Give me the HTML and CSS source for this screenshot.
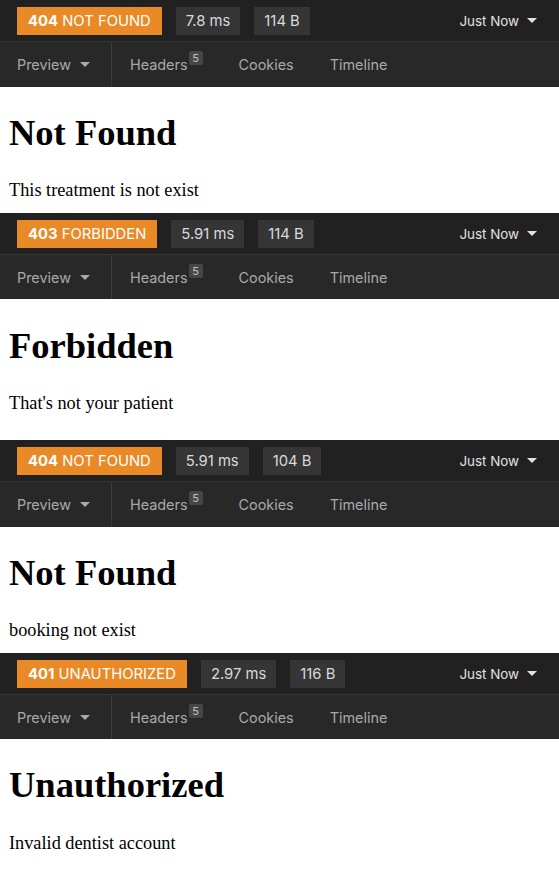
FILE: index.html
```html
<!DOCTYPE html>
<html>
<head>
<meta charset="utf-8">
<link rel="stylesheet" href="styles.css">
</head>
<body>
  <section class="response">
    <div class="status-bar">
      <span class="badge"><b>404</b> NOT FOUND</span>
      <span class="pill">7.8 ms</span>
      <span class="pill">114 B</span>
      <span class="when">Just Now <i class="caret"></i></span>
    </div>
    <nav class="tabs">
      <span class="tab tab-preview">Preview <i class="caret"></i></span>
      <span class="tab">Headers<sup class="count">5</sup></span>
      <span class="tab">Cookies</span>
      <span class="tab">Timeline</span>
    </nav>
    <div class="preview">
      <h1>Not Found</h1>
      <p>This treatment is not exist</p>
    </div>
  </section>

  <section class="response r2">
    <div class="status-bar">
      <span class="badge"><b>403</b> FORBIDDEN</span>
      <span class="pill">5.91 ms</span>
      <span class="pill">114 B</span>
      <span class="when">Just Now <i class="caret"></i></span>
    </div>
    <nav class="tabs">
      <span class="tab tab-preview">Preview <i class="caret"></i></span>
      <span class="tab">Headers<sup class="count">5</sup></span>
      <span class="tab">Cookies</span>
      <span class="tab">Timeline</span>
    </nav>
    <div class="preview">
      <h1>Forbidden</h1>
      <p>That's not your patient</p>
    </div>
  </section>

  <section class="response r3">
    <div class="status-bar">
      <span class="badge"><b>404</b> NOT FOUND</span>
      <span class="pill">5.91 ms</span>
      <span class="pill">104 B</span>
      <span class="when">Just Now <i class="caret"></i></span>
    </div>
    <nav class="tabs">
      <span class="tab tab-preview">Preview <i class="caret"></i></span>
      <span class="tab">Headers<sup class="count">5</sup></span>
      <span class="tab">Cookies</span>
      <span class="tab">Timeline</span>
    </nav>
    <div class="preview">
      <h1>Not Found</h1>
      <p>booking not exist</p>
    </div>
  </section>

  <section class="response r4">
    <div class="status-bar">
      <span class="badge"><b>401</b> UNAUTHORIZED</span>
      <span class="pill">2.97 ms</span>
      <span class="pill">116 B</span>
      <span class="when">Just Now <i class="caret"></i></span>
    </div>
    <nav class="tabs">
      <span class="tab tab-preview">Preview <i class="caret"></i></span>
      <span class="tab">Headers<sup class="count">5</sup></span>
      <span class="tab">Cookies</span>
      <span class="tab">Timeline</span>
    </nav>
    <div class="preview">
      <h1>Unauthorized</h1>
      <p>Invalid dentist account</p>
    </div>
  </section>
</body>
</html>
```

FILE: styles.css
```css
html, body {
  margin: 0;
  padding: 0;
  background: #ffffff;
}

.response {
  display: flex;
  flex-direction: column;
}

.status-bar {
  height: 42px;
  box-sizing: border-box;
  background: #212121;
  border-bottom: 1px solid #363636;
  display: flex;
  align-items: center;
  gap: 14px;
  padding: 0 22px 0 17px;
  font-family: Inter, "Open Sans", sans-serif;
  font-size: 14.8px;
  color: #dcdcdc;
}

.badge {
  background: #e98a26;
  color: #ffffff;
  height: 28px;
  line-height: 28px;
  padding: 0 11px;
  box-sizing: border-box;
  white-space: nowrap;
}

.badge b {
  font-weight: 700;
}

.pill {
  background: #353535;
  color: #dadada;
  height: 28px;
  line-height: 28px;
  padding: 0 10px;
  white-space: nowrap;
}

.when {
  margin-left: auto;
  display: flex;
  align-items: center;
  gap: 8px;
  color: #e2e2e2;
  font-size: 13.4px;
}

.caret {
  display: inline-block;
  width: 0;
  height: 0;
  border-left: 5px solid transparent;
  border-right: 5px solid transparent;
  border-top: 5px solid currentColor;
}

.tabs {
  height: 45px;
  box-sizing: border-box;
  background: #282828;
  display: flex;
  align-items: stretch;
  font-family: Inter, "Open Sans", sans-serif;
  font-size: 14.4px;
  color: #a9a9a9;
}

.tab {
  display: flex;
  align-items: center;
  padding: 0 18px;
  white-space: nowrap;
}

.tab-preview {
  padding: 0 21px 0 17px;
  gap: 9px;
  border-right: 1px solid #3c3c3c;
}

.count {
  align-self: flex-start;
  margin-top: 9px;
  margin-left: 1px;
  background: #464646;
  color: #c4c4c4;
  font-size: 11px;
  line-height: 14px;
  min-width: 14px;
  height: 14px;
  text-align: center;
  border-radius: 2px;
}

.preview {
  height: 126px;
  box-sizing: border-box;
  padding: 26px 9px 0;
  font-family: "Liberation Serif", "Times New Roman", serif;
  color: #000000;
  overflow: hidden;
}

.preview h1 {
  margin: 0 0 27px;
  font-size: 36.5px;
  font-weight: 700;
  line-height: 40px;
}

.preview p {
  margin: 0;
  font-size: 18.3px;
  line-height: 21px;
}

.r2 .tabs { height: 44px; }
.r2 .preview { height: 141px; padding-top: 27px; }
.r4 .tabs { height: 44px; }
.r4 .preview { height: 130px; }
.r4 .preview h1 { margin-bottom: 28px; }
```
